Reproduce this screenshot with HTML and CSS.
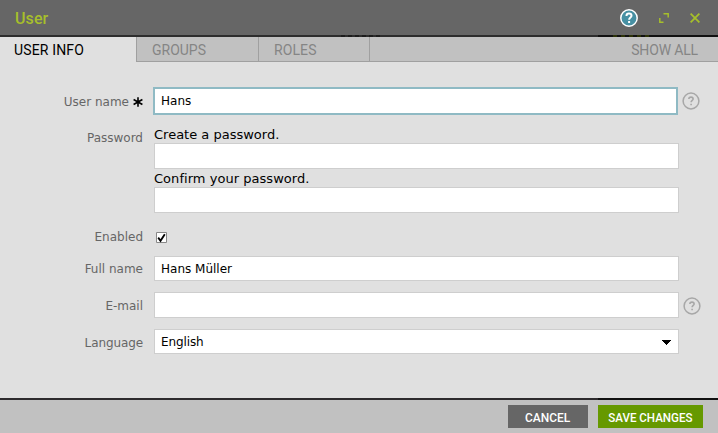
FILE: index.html
```html
<!DOCTYPE html>
<html lang="en">
<head>
<meta charset="utf-8">
<title>User</title>
<link rel="stylesheet" href="styles.css">
</head>
<body>
<div class="dialog">
  <header class="titlebar">
    <h1 class="title">User</h1>
    <div class="tools">
      <svg class="tool-help" width="18" height="18" viewBox="0 0 18 18"><circle cx="9" cy="9" r="8.2" fill="#4790a3" stroke="#fff" stroke-width="1.5"/><path d="M6.5 7.1V6.8C6.5 5.4 7.5 4.6 9 4.6S11.5 5.5 11.5 6.8C11.5 8.5 9.1 8.5 9.1 10.7M9.1 12.1V14.1" fill="none" stroke="#fff" stroke-width="2"/></svg>
      <svg class="tool-expand" width="10" height="10" viewBox="0 0 10 10"><path d="M4.5 .8H9.2V4.5M.8 5V9.2H4.5" fill="none" stroke="#a6bf2b" stroke-width="1.5"/></svg>
      <svg class="tool-close" width="10" height="10" viewBox="0 0 10 10"><path d="M.6 .6L9.4 9.4M9.4 .6L.6 9.4" fill="none" stroke="#a6bf2b" stroke-width="1.8"/></svg>
    </div>
  </header>
  <nav class="tabs">
    <span class="tab active">USER INFO</span>
    <span class="tab groups">GROUPS</span>
    <span class="tab roles">ROLES</span>
    <span class="tab all">SHOW ALL</span>
  </nav>
  <main class="form">
    <div class="row row-user">
      <div class="label"><span>User name</span><svg class="required" width="10" height="10" viewBox="0 0 10 10"><path d="M5 .2V9.8M.6 2.5L9.4 7.5M9.4 2.5L.6 7.5" stroke="#000" stroke-width="1.6"/></svg></div>
      <div class="field focus"><span>Hans</span></div>
      <svg class="help" width="18" height="18" viewBox="0 0 18 18"><circle cx="9" cy="9" r="7.9" fill="none" stroke="#a7a7a7" stroke-width="1.5"/><path d="M6.9 7V6.8C6.9 5.7 7.7 5.1 9 5.1S11.1 5.8 11.1 6.9C11.1 8.4 9.1 8.4 9.1 10.3M9.1 11.7V13.2" fill="none" stroke="#a7a7a7" stroke-width="1.6"/></svg>
    </div>
    <div class="row row-password">
      <div class="label"><span>Password</span></div>
      <div class="stack">
        <div class="hint"><span>Create a password.</span></div>
        <div class="field tall"></div>
        <div class="hint confirm"><span>Confirm your password.</span></div>
        <div class="field tall"></div>
      </div>
    </div>
    <div class="row row-enabled">
      <div class="label"><span>Enabled</span></div>
      <svg class="check" width="11" height="11" viewBox="0 0 11 11"><path d="M.5 .5H10.5V10.5H.5Z" fill="#fff" stroke="#888"/><path d="M2.2 5.6L4.5 8.8L8.8 2.2" fill="none" stroke="#000" stroke-width="1.8"/></svg>
    </div>
    <div class="row row-full">
      <div class="label"><span>Full name</span></div>
      <div class="field"><span>Hans Müller</span></div>
    </div>
    <div class="row row-email">
      <div class="label"><span>E-mail</span></div>
      <div class="field tall"></div>
      <svg class="help" width="18" height="18" viewBox="0 0 18 18"><circle cx="9" cy="9" r="7.9" fill="none" stroke="#a7a7a7" stroke-width="1.5"/><path d="M6.9 7V6.8C6.9 5.7 7.7 5.1 9 5.1S11.1 5.8 11.1 6.9C11.1 8.4 9.1 8.4 9.1 10.3M9.1 11.7V13.2" fill="none" stroke="#a7a7a7" stroke-width="1.6"/></svg>
    </div>
    <div class="row row-language">
      <div class="label"><span class="tight">Language</span></div>
      <div class="field select"><span class="tight">English</span><svg width="9" height="5" viewBox="0 0 9 5" shape-rendering="crispEdges"><path d="M0 0H9L5 5H4Z"/></svg></div>
    </div>
  </main>
  <footer class="footer">
    <div class="button cancel"><span>CANCEL</span></div>
    <div class="button save"><span>SAVE CHANGES</span></div>
  </footer>
</div>
</body>
</html>
```
FILE: styles.css
```css
* { box-sizing: border-box; }
body { margin: 0; background: #e0e0e0; font-family: "DejaVu Sans", sans-serif; font-size: 12px; line-height: 16px; color: #000; }
svg { display: block; flex: none; }
span { white-space: nowrap; }
.tight { letter-spacing: -.1px; }
.dialog { width: 718px; height: 433px; display: flex; flex-direction: column; overflow: hidden; }
.titlebar { height: 37px; flex: none; display: flex; justify-content: space-between; background: repeating-linear-gradient(90deg, #1c1c1c 0 4px, #2d2d2d 4px 7px) 341px 35px / 41px 2px no-repeat, repeating-linear-gradient(90deg, #2c3208 0 4px, #111 4px 8px) 613px 35px / 38px 2px no-repeat, linear-gradient(90deg, #2d2d2d 598px, #111 598px) 0 35px / 100% 2px no-repeat #666; padding: 0 18px 0 15px; font-family: Roboto, sans-serif; }
.title { margin: 9px 0 0; font-size: 16px; line-height: 20px; font-weight: 500; color: #a6bf2b; letter-spacing: .1px; }
.tools { display: flex; align-items: center; height: 36px; }
.tool-expand { margin-left: 21px; }
.tool-close { margin-left: 21px; }
.tabs { height: 25px; flex: none; display: flex; font-family: Roboto, sans-serif; font-size: 14px; line-height: 27px; color: #858585; background: #c1c1c1; }
.tab { border-bottom: 1px solid #a0a0a0; border-left: 1px solid #a0a0a0; padding-left: 15px; height: 25px; }
.tab.active { width: 136px; border: 0; padding-left: 14px; background: #e0e0e0; color: #000; letter-spacing: .15px; }
.tab.groups { width: 122px; }
.tab.roles { width: 111px; letter-spacing: .1px; }
.tab.all { flex: 1; text-align: right; padding: 0 20px 0 0; letter-spacing: -.15px; }
.form { flex: 1; padding-top: 25px; }
.row { display: flex; align-items: flex-start; }
.label { width: 143px; margin-right: 11px; display: flex; justify-content: flex-end; color: #666; flex: none; }
.field { width: 525px; height: 25px; flex: none; background: #fff; border: 1px solid #cecece; padding: 4px 0 0 6px; line-height: 16px; }
.field.tall { height: 26px; }
.field.focus { height: 28px; border: 2px solid #8fbac4; padding: 4px 0 0 6px; }
.row-user { height: 40px; }
.row-user .label { margin: 7px 10px 0 0; }
.required { margin: 3px 0 0 4px; }
.help { margin: 5px 0 0 4px; }
.row-password { height: 105px; }
.row-password .label { margin-top: 3px; }
.stack { width: 525px; }
.hint { height: 16px; font-size: 13px; line-height: 16px; }
.hint.confirm { height: 18px; padding-top: 2px; letter-spacing: .04px; }
.row-enabled { height: 24px; margin-top: -3px; }
.check { margin: 3px 0 0 2px; }
.row-full { height: 36px; margin-top: 3px; }
.row-full .label { margin-top: 5px; }
.row-email { height: 37px; }
.row-email .label { margin-top: 6px; }
.row-language .label { margin-top: 6px; }
.select { display: flex; justify-content: space-between; padding-right: 7px; }
.select svg { margin-top: 6px; }
.footer { height: 35px; flex: none; display: flex; justify-content: flex-end; gap: 10px; padding: 7px 15px 0 0; background: linear-gradient(90deg, #2d2b2d 598px, #111 598px) 0 0 / 100% 2px no-repeat #c1c1c1; font-family: Roboto, sans-serif; font-size: 13px; font-weight: 500; color: #fff; }
.button { height: 23px; line-height: 25px; display: flex; justify-content: center; }
.cancel { width: 80px; background: #666; }
.save { width: 105px; background: #690; }
.cancel span { transform: scaleX(.92); }
.save span { transform: scaleX(.89); }
```
